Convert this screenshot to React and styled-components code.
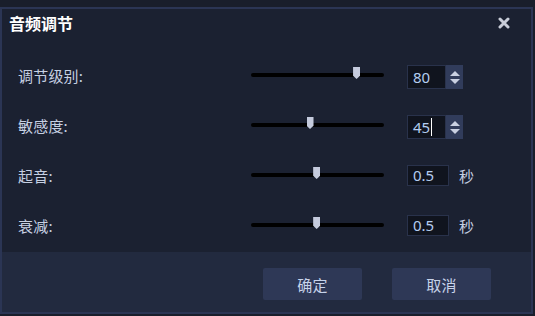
import React from 'react';
import styled, { createGlobalStyle } from 'styled-components';

const GlobalStyle = createGlobalStyle`
  html, body {
    margin: 0;
    padding: 0;
    background: #191e2b;
  }
  body {
    font-family: "Noto Sans CJK SC", "Noto Sans", sans-serif;
  }
`;

const Page = styled.div`
  width: 535px;
  height: 316px;
  padding-top: 7px;
  box-sizing: border-box;
  background: #191e2b;
  overflow: hidden;
`;

const Dialog = styled.div`
  width: 533px;
  height: 307px;
  box-sizing: border-box;
  border: 2px solid #2b3554;
  background: #1b2131;
  display: flex;
  flex-direction: column;
`;

const TitleBar = styled.div`
  height: 25px;
  display: flex;
  align-items: center;
  justify-content: space-between;
  padding: 0 21px 0 7px;
`;

const Title = styled.div`
  color: #ffffff;
  font-size: 16px;
  font-weight: 700;
  line-height: 16px;
  margin-top: 2px;
`;

const CloseButton = styled.div`
  width: 12px;
  height: 12px;
  display: flex;
  margin-top: 2px;
  cursor: pointer;
`;

const Body = styled.div`
  flex: 1;
  display: flex;
  flex-direction: column;
  padding: 16px 0 0 16px;
`;

const Row = styled.div`
  height: 50px;
  display: flex;
  align-items: center;
`;

const Label = styled.div`
  width: 233px;
  color: #c6d0e2;
  font-size: 15px;
  letter-spacing: 0.2px;
`;

const Track = styled.div`
  position: relative;
  width: 133px;
  height: 4px;
  border-radius: 2px;
  background: #000000;
  margin-right: 23px;
`;

const Thumb = styled.div`
  position: absolute;
  top: -6px;
  width: 7px;
  height: 12px;
  margin-left: -3px;
  background: #c5cbdd;
  clip-path: polygon(0 0, 100% 0, 100% 72%, 50% 100%, 0 72%);
`;

const InputBox = styled.div`
  width: ${p => p.$wide ? 42 : 39}px;
  height: ${p => p.$tall ? 24 : 21}px;
  box-sizing: border-box;
  background: #10141e;
  border: 1px solid #29324b;
  color: #b4cdf0;
  font-family: "Noto Sans", "Open Sans", sans-serif;
  font-size: 15px;
  line-height: ${p => p.$tall ? 22 : 19}px;
  padding-left: 5px;
  margin-top: ${p => p.$tall ? 4 : 1}px;
  display: flex;
  align-items: center;
`;

const Caret = styled.span`
  display: inline-block;
  width: 1px;
  height: 18px;
  background: #ffffff;
  margin-left: 1px;
`;

const Spinner = styled.div`
  width: 17px;
  height: 24px;
  margin-top: 4px;
  background: #313c5b;
  display: flex;
  flex-direction: column;
  align-items: center;
  justify-content: center;
  gap: 3px;
`;

const Arrow = styled.div`
  width: 0;
  height: 0;
  border-left: 5px solid transparent;
  border-right: 5px solid transparent;
  ${p => p.$up
    ? 'border-bottom: 5px solid #c9d0e2;'
    : 'border-top: 5px solid #c9d0e2;'}
`;

const Unit = styled.div`
  color: #c6d0e2;
  font-size: 15px;
  margin-left: 10px;
  margin-top: 1px;
`;

const Footer = styled.div`
  height: 60px;
  background: #222a3f;
  display: flex;
  justify-content: flex-end;
  align-items: center;
  gap: 30px;
  padding: 4px 40px 0 0;
  box-sizing: border-box;
`;

const Button = styled.div`
  width: 99px;
  height: 32px;
  border-radius: 2px;
  background: #2e3856;
  color: #c7d3ea;
  font-size: 15px;
  display: flex;
  align-items: center;
  justify-content: center;
  letter-spacing: 0.3px;
`;

const rows = [
  { label: '调节级别:', pos: 79, value: '80', spin: true },
  { label: '敏感度:', pos: 44, value: '45', spin: true, caret: true },
  { label: '起音:', pos: 49, value: '0.5', unit: '秒' },
  { label: '衰减:', pos: 49, value: '0.5', unit: '秒' },
];

export default function App() {
  return (
    <Page>
      <GlobalStyle />
      <Dialog>
        <TitleBar>
          <Title>音频调节</Title>
          <CloseButton>
            <svg width="12" height="12" viewBox="0 0 12 12">
              <path d="M2 2 L10 10 M10 2 L2 10" stroke="#c9cdd8" strokeWidth="3" strokeLinecap="round" />
            </svg>
          </CloseButton>
        </TitleBar>
        <Body>
          {rows.map(r => (
            <Row key={r.label}>
              <Label>{r.label}</Label>
              <Track>
                <Thumb style={{ left: `${r.pos}%` }} />
              </Track>
              <InputBox $tall={r.spin} $wide={!r.spin}>
                {r.value}
                {r.caret && <Caret />}
              </InputBox>
              {r.spin && (
                <Spinner>
                  <Arrow $up />
                  <Arrow />
                </Spinner>
              )}
              {r.unit && <Unit>{r.unit}</Unit>}
            </Row>
          ))}
        </Body>
        <Footer>
          <Button>确定</Button>
          <Button>取消</Button>
        </Footer>
      </Dialog>
    </Page>
  );
}
